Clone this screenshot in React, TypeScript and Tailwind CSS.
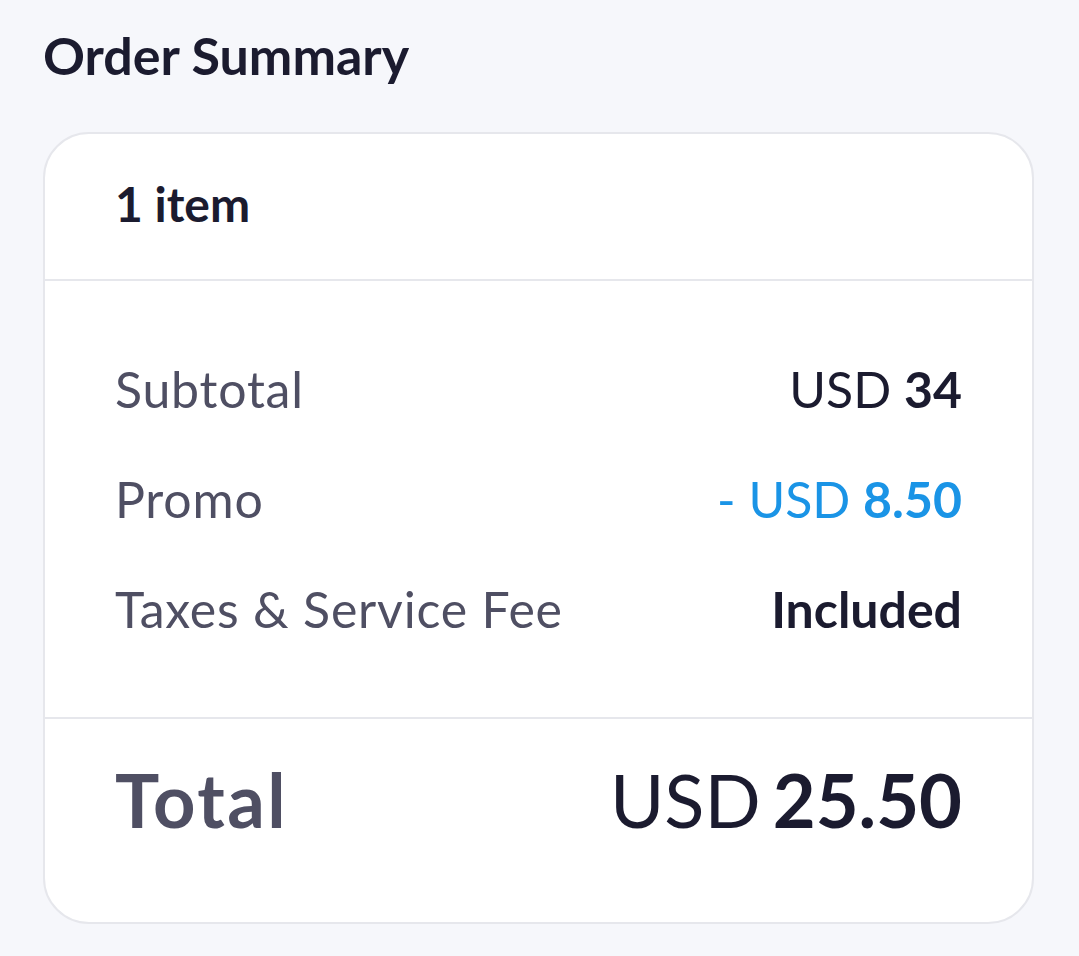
import React from 'react';

const Row: React.FC<{ label: string; children: React.ReactNode }> = ({ label, children }) => (
  <div className="flex h-[110px] items-center justify-between">
    <span className="text-[50px] tracking-[0.8px] text-[#4f4f63]">{label}</span>
    <span className="text-[50px]">{children}</span>
  </div>
);

export default function App() {
  return (
    <div className="min-h-[956px] bg-[#f6f7fb] px-[43px] pt-[24px]" style={{ fontFamily: 'Lato, "Noto Sans", sans-serif' }}>
      <h1 className="text-[52px] font-bold leading-[62px] text-[#1b1b2f]">Order Summary</h1>

      <div className="mt-[46px] w-[991px] overflow-hidden rounded-[46px] border-2 border-[#e6e7ec] bg-white">
        <div className="flex h-[145px] items-center px-[70px] pb-[6px]">
          <span className="text-[48px] font-bold text-[#1b1b2f]">1 item</span>
        </div>

        <div className="border-t-2 border-[#e6e7ec] px-[70px] py-[53px]">
          <Row label="Subtotal">
            <span className="text-[#1b1b2f]">USD <span className="font-bold">34</span></span>
          </Row>
          <Row label="Promo">
            <span className="text-[#1a94e6]">- USD <span className="font-bold">8.50</span></span>
          </Row>
          <Row label="Taxes &amp; Service Fee">
            <span className="font-bold text-[#1b1b2f]">Included</span>
          </Row>
        </div>

        <div className="flex items-start justify-between border-t-2 border-[#e6e7ec] px-[70px] pt-[36px] pb-[78px]">
          <span className="text-[74px] font-bold leading-[89px] tracking-[2.5px] text-[#4f4f63]">Total</span>
          <span className="text-[74px] leading-[89px] text-[#1b1b2f]">
            USD<span className="ml-[12px] font-bold">25.50</span>
          </span>
        </div>
      </div>
    </div>
  );
}
